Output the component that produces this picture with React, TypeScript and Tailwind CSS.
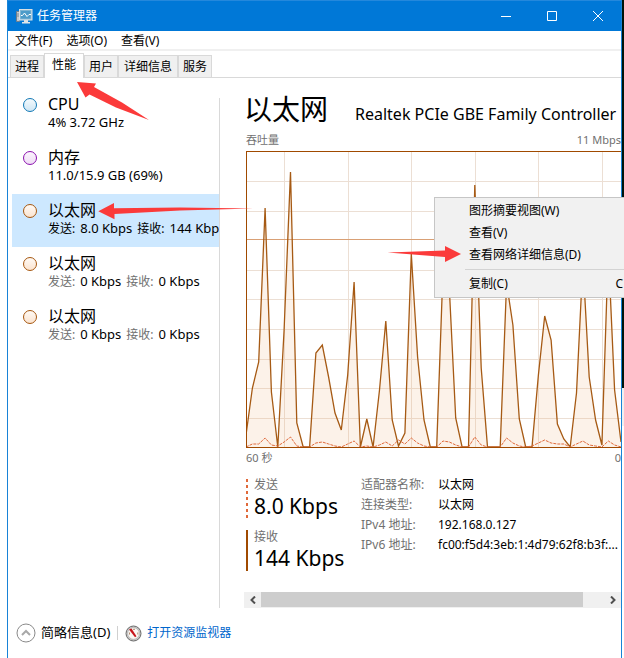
import React from 'react';

const menus = ['文件(F)', '选项(O)', '查看(V)'];

const tabs = [
  { label: '进程', width: 'w-[34px]' },
  { label: '性能', width: 'w-[40px]', active: true },
  { label: '用户', width: 'w-[34px]' },
  { label: '详细信息', width: 'w-[60px]' },
  { label: '服务', width: 'w-[34px]' },
];

const adapters = [
  { send: '8.0 Kbps', receive: '144 Kbps', selected: true },
  { send: '0 Kbps', receive: '0 Kbps', selected: false },
  { send: '0 Kbps', receive: '0 Kbps', selected: false },
];

const details = [
  { label: '适配器名称:', value: '以太网' },
  { label: '连接类型:', value: '以太网' },
  { label: 'IPv4 地址:', value: '192.168.0.127' },
  { label: 'IPv6 地址:', value: 'fc00:f5d4:3eb:1:4d79:62f8:b3f:...' },
];

// One sample per second, as the distance from the top of a 296 unit plot
const received = [
  284, 237, 211, 57, 241, 296, 179, 21, 272, 296, 296, 202, 194, 226, 262, 279, 224, 131, 296, 268,
  296, 239, 170, 269, 295, 282, 103, 206, 269, 296, 296, 119, 139, 267, 296, 296, 34, 217, 296, 296,
  296, 132, 174, 268, 296, 296, 224, 165, 189, 273, 288, 296, 242, 111, 226, 269, 294, 99, 239, 291,
];
const sent = [
  296, 293, 293, 287, 294, 295, 291, 286, 295, 296, 296, 292, 291, 293, 295, 296, 293, 290, 296, 295,
  296, 294, 291, 295, 289, 293, 287, 292, 295, 296, 296, 290, 291, 294, 296, 296, 286, 294, 296, 296,
  296, 287, 292, 295, 296, 295, 292, 289, 292, 293, 293, 296, 293, 290, 294, 295, 296, 290, 294, 296,
];

const toPoints = (values: number[]) =>
  values.map((y, i) => `${((i * 375) / 59).toFixed(1)},${y}`).join(' ');

const AppIcon: React.FC = () => (
  <svg width="17" height="15" viewBox="0 0 17 15" aria-hidden="true">
    <path d="M0.5 2.5h3v10h-3z" fill="#c3cbd1" stroke="#6f7f8c" />
    <path d="M1 5h2M1 7h2" stroke="#7e8a93" />
    <path d="M8 11h4v2h2v1.500H6V13h2z" fill="#dfe4e8" />
    <rect x="3.500" y="0.5" width="12.500" height="10.500" fill="#fff" stroke="#d9dfe3" />
    <rect x="4.500" y="1.500" width="10.500" height="8.500" fill="#4d9cc9" stroke="#7eb4d2" />
    <path d="M5 6.500h1.500L8.500 4l2.500 3.500L13 5.500h2" fill="none" stroke="#fff" />
  </svg>
);

const GaugeIcon: React.FC = () => (
  <svg width="17" height="17" viewBox="0 0 17 17" aria-hidden="true">
    <circle cx="8.500" cy="8.500" r="7.500" fill="#c9c9c9" stroke="#6a6a6a" />
    <circle cx="8.500" cy="8.500" r="5.800" fill="#fbf8f4" stroke="#a8a8a8" strokeWidth="0.600" />
    <path d="M4.500 9.500V7.500M8 4.300h2M12.800 7.500v2" stroke="#b08a70" fill="none" />
    <path d="M4 4.500L6.500 3.500 11.500 11.200 10 12.200z" fill="#c8161d" />
  </svg>
);

const Dot: React.FC<{ color: 'blue' | 'purple' | 'orange' }> = ({ color }) => {
  const tones = {
    blue: 'border-[#1178b5] from-[#f4fafd] to-[#cfe6f4]',
    purple: 'border-[#8b12ae] from-[#fbf5fd] to-[#efdcf5]',
    orange: 'border-[#a6570f] from-[#fffaf5] to-[#fbe4d0]',
  };
  return (
    <span
      className={`mt-[10px] h-[14px] w-[14px] shrink-0 rounded-full border bg-linear-to-b ${tones[color]}`}
    />
  );
};

const Resource: React.FC<{
  color: 'blue' | 'purple' | 'orange';
  title: string;
  selected?: boolean;
  children: React.ReactNode;
}> = ({ color, title, selected, children }) => (
  <button
    type="button"
    className={`flex h-[53px] w-full gap-[11px] overflow-hidden pl-[11px] text-left ${selected ? 'bg-[#cde8ff]' : 'bg-white'}`}
  >
    <Dot color={color} />
    <span className="flex flex-col whitespace-nowrap pt-[6px]">
      <span className="text-[16px] leading-[20px]">{title}</span>
      <span className="flex gap-[5px] text-[13px] leading-[17px]">{children}</span>
    </span>
  </button>
);

const Chart: React.FC = () => (
  <svg
    className="block h-[297px] w-full"
    viewBox="0 0 375 297"
    preserveAspectRatio="none"
    role="img"
    aria-label="吞吐量"
  >
    <g stroke="#ecdfd4" shapeRendering="crispEdges">
      {[30, 60, 119, 148, 178, 208, 237, 267].map((y) => (
        <path key={y} d={`M0 ${y + 0.5}H375`} />
      ))}
      {[38, 102, 165, 229, 292, 356].map((x) => (
        <path key={x} d={`M${x + 0.5} 0V296`} />
      ))}
    </g>
    <rect x="0" y="88" width="375" height="1" fill="#d9a075" />
    <polygon points={`0,296 ${toPoints(received)} 375,296`} fill="#f0b587" fillOpacity="0.18" />
    <polyline points={toPoints(received)} fill="none" stroke="#a65a14" strokeWidth="1.300" />
    <polyline points={toPoints(sent)} fill="none" stroke="#e0693a" strokeDasharray="3 1" />
    <path d="M375 0.500H0.500V296.500H375" fill="none" stroke="#a04a00" shapeRendering="crispEdges" />
  </svg>
);

const ContextMenu: React.FC = () => (
  <div
    role="menu"
    className="absolute top-[197px] -right-[4px] left-[434px] h-[101px] border border-[#c6c6c6] bg-[#f1f1f1] py-[2px] text-[12px] leading-[22px]"
  >
    {['图形摘要视图(W)', '查看(V)', '查看网络详细信息(D)'].map((item) => (
      <button key={item} type="button" role="menuitem" className="block w-full pl-[34px] text-left">
        {item}
      </button>
    ))}
    <div className="my-[3px] ml-[30px] border-t border-[#d3d3d3]" />
    <button type="button" role="menuitem" className="flex w-full justify-between pr-[4px] pl-[34px]">
      <span>复制(C)</span>
      <span>C</span>
    </button>
  </div>
);

// Red pointers drawn over the window
const Arrows: React.FC = () => (
  <svg
    className="pointer-events-none absolute top-0 left-0"
    width="470"
    height="270"
    viewBox="0 0 470 270"
    fill="#fb3a3a"
    aria-hidden="true"
  >
    <path d="M77 82L96 83.500 94 87 122 102.500 149 120 116 107.500 89.500 94.500 85.500 97.500z" />
    <path d="M98.300 211.300L114 203V208.300L180 207.500 253 208.500 180 210.500 114.500 214V219.300z" />
    <path d="M387.500 252.500L445 250.500V246L461 254 445 262V257z" />
  </svg>
);

const App: React.FC = () => {
  return (
    <div className="relative flex min-h-screen overflow-hidden bg-white pl-[7px] font-['Noto_Sans','Noto_Sans_CJK_SC',sans-serif] text-black">
      <div className="flex min-w-0 flex-1 flex-col border-x border-b border-[#1883d7]">
        {/* Title bar */}
        <header className="flex h-[31px] items-center border-t border-[#2488dc] bg-[#0078d7] pl-[8px] text-white">
          <AppIcon />
          <h1 className="flex-1 pl-[4px] text-[12px] leading-[20px]">任务管理器</h1>
          <div className="flex h-full">
            <button type="button" aria-label="最小化" className="flex w-[46px] items-center justify-center">
              <svg width="10" height="10" stroke="#fff" fill="none">
                <path d="M0 5.500h10" />
              </svg>
            </button>
            <button type="button" aria-label="最大化" className="flex w-[46px] items-center justify-center">
              <svg width="10" height="10" stroke="#fff" fill="none">
                <path d="M.5.5h9v9h-9z" />
              </svg>
            </button>
            <button type="button" aria-label="关闭" className="flex w-[46px] items-center justify-center">
              <svg width="10" height="10" stroke="#fff" fill="none">
                <path d="M0 0l10 10M10 0L0 10" />
              </svg>
            </button>
          </div>
        </header>

        {/* Menu bar */}
        <nav className="flex h-[20px] gap-[14px] border-b-2 border-[#f0f0f0] pl-[7px] text-[12px] leading-[19px]">
          {menus.map((menu) => (
            <button key={menu} type="button">
              {menu}
            </button>
          ))}
        </nav>

        {/* Tabs */}
        <div role="tablist" className="flex h-[27px] items-end border-b border-[#d9d9d9] pl-[2px] text-[12px]">
          {tabs.map((tab) => (
            <button
              key={tab.label}
              type="button"
              role="tab"
              aria-selected={!!tab.active}
              className={`shrink-0 whitespace-nowrap border border-b-0 border-[#d9d9d9] ${tab.width} ${
                tab.active ? '-mb-px h-[25px] bg-white pb-[2px]' : 'h-[22px] bg-[#f0f0f0]'
              }`}
            >
              {tab.label}
            </button>
          ))}
        </div>

        <main className="flex flex-1 pl-[4px]">
          <aside className="my-[10px] w-[207px] shrink-0">
            <Resource color="blue" title="CPU">
              4% 3.72 GHz
            </Resource>
            <Resource color="purple" title="内存">
              11.0/15.9 GB (69%)
            </Resource>
            {adapters.map((adapter, i) => (
              <Resource key={i} color="orange" title="以太网" selected={adapter.selected}>
                <span className={`text-[12px] ${adapter.selected ? '' : 'text-[#707070]'}`}>发送:</span>
                <span>{adapter.send}</span>
                <span className={`text-[12px] ${adapter.selected ? '' : 'text-[#707070]'}`}>接收:</span>
                <span>{adapter.receive}</span>
              </Resource>
            ))}
          </aside>
          <div className="mt-[20px] border-l border-[#d9d9d9]" />

          <section className="flex min-w-0 flex-1 flex-col pl-[24px]">
            <div className="flex h-[52px] items-baseline gap-[27px] overflow-hidden whitespace-nowrap pt-[11px]">
              <h2 className="text-[28px] leading-[40px]">以太网</h2>
              <p className="text-[16px]">Realtek PCIe GBE Family Controller</p>
            </div>
            <div className="flex h-[21px] justify-between pl-[2px] text-[11px] leading-[20px] text-[#707070]">
              <span>吞吐量</span>
              <span>11 Mbps</span>
            </div>
            <div className="pl-[2px]">
              <Chart />
            </div>
            <div className="flex justify-between pl-[2px] text-[11px] leading-[20px] text-[#707070]">
              <span>60 秒</span>
              <span>0</span>
            </div>

            <div className="flex pt-[10px] pl-[2px]">
              <div className="flex w-[115px] shrink-0 flex-col gap-[12px]">
                <div className="flex h-[40px] gap-[6px]">
                  <svg width="2" height="40" aria-hidden="true">
                    <path d="M1 1V40" stroke="#e0693a" strokeWidth="2" strokeDasharray="3 3" />
                  </svg>
                  <dl>
                    <dt className="text-[12px] leading-[14px] text-[#707070]">发送</dt>
                    <dd className="text-[21px] leading-[28px]">8.0 Kbps</dd>
                  </dl>
                </div>
                <div className="flex h-[41px] gap-[6px]">
                  <div className="w-[2px] bg-[#a04a00]" />
                  <dl>
                    <dt className="text-[12px] leading-[14px] text-[#707070]">接收</dt>
                    <dd className="text-[21px] leading-[28px]">144 Kbps</dd>
                  </dl>
                </div>
              </div>
              <dl className="grid min-w-0 auto-rows-[20px] grid-cols-[77px_1fr] text-[12px] leading-[14px] whitespace-nowrap">
                {details.map((row) => (
                  <React.Fragment key={row.label}>
                    <dt className="text-[#707070]">{row.label}</dt>
                    <dd>{row.value}</dd>
                  </React.Fragment>
                ))}
              </dl>
            </div>

            {/* Horizontal scrollbar */}
            <div className="mt-[21px] flex h-[16px] bg-[#f0f0f0]">
              <button type="button" aria-label="向左滚动" className="flex w-[17px] items-center justify-center">
                <svg width="6" height="8" fill="none" stroke="#505050" strokeWidth="2">
                  <path d="M5 .5L1.500 4 5 7.500" />
                </svg>
              </button>
              <div className="mr-[21px] h-[15px] flex-1 bg-[#cdcdcd]" />
              <button type="button" aria-label="向右滚动" className="flex w-[17px] items-center justify-center">
                <svg width="6" height="8" fill="none" stroke="#505050" strokeWidth="2">
                  <path d="M1 .5L4.500 4 1 7.500" />
                </svg>
              </button>
            </div>
          </section>
        </main>

        <footer className="flex h-[50px] items-center pl-[8px] text-[12px]">
          <button type="button" className="flex items-center gap-[5px] text-[13px]">
            <svg width="20" height="20" fill="none" stroke="#8a8a8a" aria-hidden="true">
              <circle cx="10" cy="10" r="9" />
              <path d="M6 12l4-4 4 4" strokeWidth="2" stroke="#a8a8a8" />
            </svg>
            简略信息(D)
          </button>
          <span className="mx-[7px] h-[14px] border-l border-[#d0d0d0]" />
          <a href="#resmon" className="flex items-center gap-[5px] text-[#0066cc]">
            <GaugeIcon />
            打开资源监视器
          </a>
        </footer>
      </div>

      {/* Sliver of the window behind */}
      <div className="flex w-[2px] flex-col">
        <div className="h-[388px] bg-[#00140a]" />
        <div className="h-[38px] bg-[#f0f0f0]" />
      </div>

      <ContextMenu />
      <Arrows />
    </div>
  );
};

export default App;
